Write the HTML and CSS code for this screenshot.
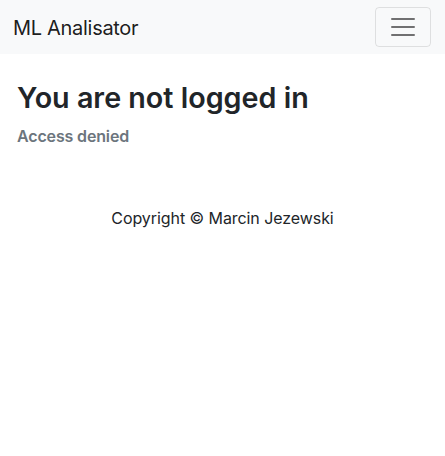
FILE: index.html
```html
<!DOCTYPE html>
<html lang="pl">
<head>
<meta charset="utf-8">
<title>ML Analisator</title>
<link rel="stylesheet" href="styles.css">
</head>
<body>
<nav class="navbar">
  <a class="brand" href="#">ML Analisator</a>
  <button class="toggler" type="button" aria-label="Toggle navigation">
    <svg class="toggler-icon" viewBox="0 0 30 30" width="30" height="30"><path d="M4 7h22M4 15h22M4 23h22" stroke="rgba(0,0,0,0.55)" stroke-width="2" stroke-linecap="round" fill="none"/></svg>
  </button>
</nav>
<main class="content">
  <h1 class="title">You are not logged in</h1>
  <p class="subtitle">Access denied</p>
</main>
<footer class="footer">Copyright © Marcin Jezewski</footer>
</body>
</html>
```
FILE: styles.css
```css
* { box-sizing: border-box; }
body {
  margin: 0;
  font-family: Inter, "Noto Sans", sans-serif;
  font-size: 16px;
  line-height: 1.5;
  color: #212529;
  background: #fff;
}
.navbar {
  display: flex;
  align-items: center;
  justify-content: space-between;
  background: #f8f9fa;
  height: 54px;
  padding: 0 14px 0 13px;
}
.brand {
  font-size: 20px;
  letter-spacing: -0.3px;
  color: rgba(0,0,0,0.9);
  text-decoration: none;
  line-height: 30px;
  padding-top: 2px;
}
.toggler {
  width: 56px;
  height: 40px;
  padding: 0;
  display: flex;
  align-items: center;
  justify-content: center;
  background: transparent;
  border: 1px solid rgba(0,0,0,0.1);
  border-radius: 4px;
}
.toggler-icon { display: block; }
.content {
  padding: 26.5px 17px 0;
}
.title {
  margin: 0;
  font-size: 28.7px;
  font-weight: 600;
  line-height: 1.2;
}
.subtitle {
  margin: 9.5px 0 0;
  font-weight: 600;
  letter-spacing: -0.15px;
  color: #6c757d;
}
.footer {
  text-align: center;
  letter-spacing: -0.07px;
  margin-top: 57.5px;
}
```
